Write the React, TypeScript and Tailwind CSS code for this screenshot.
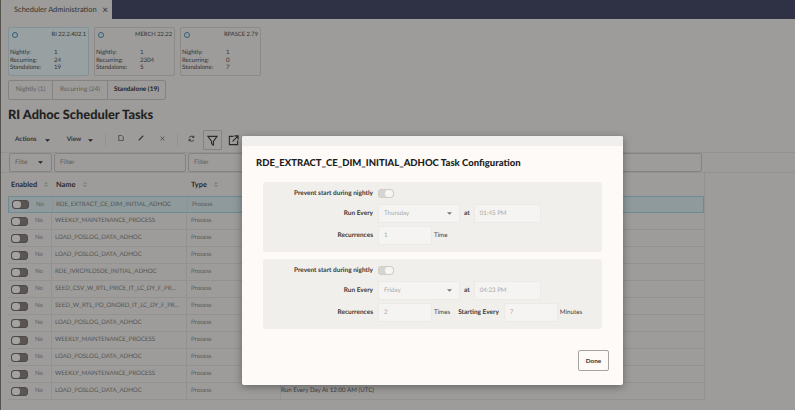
import React from "react";
import { ChevronsUpDown } from "lucide-react";

const cards = [
  { name: "RI 22.2.402.1", nightly: 1, recurring: 24, standalone: 19, active: true },
  { name: "MERCH 22.22", nightly: 1, recurring: 2304, standalone: 5, active: false },
  { name: "RPASCE 2.79", nightly: 1, recurring: 0, standalone: 7, active: false },
];

const rows = [
  "RDE_EXTRACT_CE_DIM_INITIAL_ADHOC",
  "WEEKLY_MAINTENANCE_PROCESS",
  "LOAD_POSLOG_DATA_ADHOC",
  "LOAD_POSLOG_DATA_ADHOC",
  "RDE_IVRCPILDSDE_INITIAL_ADHOC",
  "SEED_CSV_W_RTL_PRICE_IT_LC_DY_F_PR...",
  "SEED_W_RTL_PO_ONORD_IT_LC_DY_F_PR...",
  "LOAD_POSLOG_DATA_ADHOC",
  "WEEKLY_MAINTENANCE_PROCESS",
  "LOAD_POSLOG_DATA_ADHOC",
  "WEEKLY_MAINTENANCE_PROCESS",
  "LOAD_POSLOG_DATA_ADHOC",
];

const Caret = ({ className }: { className: string }) => (
  <svg viewBox="0 0 8 4" className={className} fill="currentColor">
    <path d="M0 0h8L4 4z" />
  </svg>
);

const SortHead = ({ label, className }: { label: string; className: string }) => (
  <div className={`flex items-center gap-[6px] text-[7.4px] font-bold text-[#2b2a28] ${className}`}>
    {label}
    <ChevronsUpDown className="w-[6px] h-[7px] text-[#444]" strokeWidth={2} />
  </div>
);

const SummaryCard = ({ card }: { card: (typeof cards)[number] }) => (
  <div
    className={`w-[81px] h-[49px] rounded-[2px] border pl-[1px] pr-[1px] pt-[1px] text-[6.1px] leading-[7.6px] text-[#33322f] ${
      card.active ? "border-[#7f9399] bg-[#98a0a2]" : "border-[#8b8a89] bg-[#9d9c9b]"
    }`}
  >
    <div className="flex items-center justify-between h-[11px]">
      <div className="ml-[2px] w-[6px] h-[6px] rounded-full border-[1.5px] border-[#2f5f78]" />
      <span className="text-[5.8px] mr-[1px]">{card.name}</span>
    </div>
    <div className="mt-[9px] grid grid-cols-[44px_1fr]">
      <span>Nightly:</span>
      <span>{card.nightly}</span>
      <span>Recurring:</span>
      <span>{card.recurring}</span>
      <span>Standalone:</span>
      <span>{card.standalone}</span>
    </div>
  </div>
);

const FilterBox = ({ label, className }: { label: string; className: string }) => (
  <div
    className={`h-[19px] flex items-center justify-between rounded-[2px] border border-[#848382] px-[5px] text-[6.4px] text-[#5e5d5b] ${className}`}
  >
    {label}
    {label === "Filte" && <Caret className="w-[5px] h-[3px] text-[#222] mr-[3px]" />}
  </div>
);

const TableRow = ({ name, index }: { name: string; index: number }) => (
  <div
    className={`h-[17px] flex items-center text-[6.1px] border-b ${
      index === 0 ? "border border-[#6e8a92] bg-[#8f9a9d]" : "border-[#939291]"
    }`}
  >
    <div className="w-[44px] h-full flex items-center gap-[7px] pl-[3px] border-r border-[#939291]">
      <div className="w-[17px] h-[9px] rounded-[3px] bg-[#5a5552] border border-[#4e4a48] flex">
        <div className="w-[8px] h-full rounded-[3px] bg-[#a4a3a2]" />
      </div>
      <span className="text-[#605f5d]">No</span>
    </div>
    <div className="w-[135px] h-full flex items-center pl-[3px] border-r border-[#939291] text-[#555452] whitespace-nowrap overflow-hidden">
      {name}
    </div>
    <div className="w-[94px] h-full flex items-center pl-[4px] border-r border-[#939291] text-[#555452]">
      Process
    </div>
    <div className="flex-1 h-full flex items-center text-[6.2px] text-[#403f3d]">
      {index === 11 ? "Run Every Day At 12:00 AM (UTC)" : ""}
    </div>
  </div>
);

const Field = ({ value, className, caret }: { value: string; className: string; caret?: boolean }) => (
  <div
    className={`h-[19px] flex items-center justify-between rounded-[2px] border border-[#ebeae7] bg-[#f5f4f2] px-[5px] text-[6.2px] text-[#a9a8a6] ${className}`}
  >
    {value}
    {caret && <Caret className="w-[5px] h-[3px] text-[#77767a] mr-[2px]" />}
  </div>
);

const Label = ({ children, className = "w-[110px]" }: { children: string; className?: string }) => (
  <div className={`text-right text-[6.5px] font-bold text-[#3a3937] whitespace-nowrap ${className}`}>{children}</div>
);

const ScheduleBox = ({
  day,
  time,
  count,
  unit,
  every,
  className,
}: {
  day: string;
  time: string;
  count: string;
  unit: string;
  every?: string;
  className: string;
}) => (
  <div className={`h-[70px] rounded-[3px] bg-[#f1efec] pt-[6px] flex flex-col ${className}`}>
    <div className="flex items-center gap-[5px] h-[11px]">
      <Label>Prevent start during nightly</Label>
      <div className="w-[16px] h-[9px] rounded-[3px] border border-[#d0cecb] bg-[#d6d4d1] flex justify-end">
        <div className="w-[8px] h-full rounded-[3px] bg-[#f6f5f3]" />
      </div>
    </div>
    <div className="flex items-center gap-[4px] mt-[5px]">
      <Label className="w-[110px] mr-[1px]">Run Every</Label>
      <Field value={day} caret className="w-[82px]" />
      <span className="text-[6.5px] text-[#3a3937] font-bold">at</span>
      <Field value={time} className="w-[67px]" />
    </div>
    <div className="flex items-center gap-[5px] mt-[3px]">
      <Label>Recurrences</Label>
      <Field value={count} className="w-[54px]" />
      <span className="-ml-[3px] text-[6.2px] text-[#3a3937]">{unit}</span>
      {every && (
        <>
          <Label className="ml-[3px]">Starting Every</Label>
          <Field value={every} className="w-[54px]" />
          <span className="-ml-[3px] text-[6.2px] text-[#3a3937]">Minutes</span>
        </>
      )}
    </div>
  </div>
);

export default function App() {
  return (
    <div className="relative w-[795px] h-[410px] overflow-hidden bg-[#9d9c9b] border-l border-[#55544f] font-['Lato',sans-serif] [text-rendering:geometricPrecision]">
      <div className="flex h-[19px] bg-[#2f3144]">
        <div className="w-[111px] flex items-center justify-between pl-[13px] pr-[4px] bg-[#9d9c9b] text-[7.5px] text-[#33322f] whitespace-nowrap">
          <span>Scheduler Administration</span>
          <span className="text-[10px] leading-none">×</span>
        </div>
      </div>

      <div className="pl-[7px] pt-[8px]">
        <div className="flex gap-[5px]">
          {cards.map((card) => (
            <SummaryCard key={card.name} card={card} />
          ))}
        </div>

        <div className="mt-[4px] flex w-[158px] h-[20px] rounded-[2px] border border-[#848382] text-[6.5px] text-[#5e5d5b]">
          <div className="w-[44px] flex items-center justify-center border-r border-[#848382]">Nightly (1)</div>
          <div className="w-[55px] flex items-center justify-center border-r border-[#848382]">Recurring (24)</div>
          <div className="flex-1 flex items-center justify-center font-bold text-[#1f1e1c]">Standalone (19)</div>
        </div>

        <h1 className="mt-[5px] text-[12.8px] leading-[18px] font-black text-[#232220]">RI Adhoc Scheduler Tasks</h1>

        <div className="mt-[7px] flex items-center h-[20px] text-[6.4px] font-bold text-[#33322f]">
          <span className="ml-[7px]">Actions</span>
          <Caret className="w-[5px] h-[3px] ml-[8px] text-[#222]" />
          <span className="ml-[17px]">View</span>
          <Caret className="w-[5px] h-[3px] ml-[7px] text-[#222]" />
          <div className="w-px h-[12px] ml-[12px] bg-[#939291]" />
          <svg viewBox="0 0 8 8" className="w-[6px] h-[6px] ml-[12px] -mt-[4px]" fill="none" stroke="#3a3937">
            <path d="M1 .5h4l2 2v5H1z" />
          </svg>
          <svg viewBox="0 0 8 8" className="w-[6px] h-[6px] ml-[14px] -mt-[4px]" fill="none" stroke="#3a3937" strokeWidth="1.6">
            <path d="M1 7l6-6" />
          </svg>
          <svg viewBox="0 0 8 8" className="w-[5px] h-[5px] ml-[16px] -mt-[4px]" fill="none" stroke="#3a3937" strokeWidth="1.2">
            <path d="M1 1l6 6M7 1L1 7" />
          </svg>
          <div className="w-px h-[12px] ml-[12px] bg-[#939291]" />
          <svg viewBox="0 0 10 10" className="w-[7px] h-[7px] ml-[10px] -mt-[4px]" fill="none" stroke="#3a3937" strokeWidth="1.4">
            <path d="M8.500 3.500A4 4 0 0 0 1.500 4M1.500 6.500a4 4 0 0 0 7 .5M8.500 1v2.500H6M1.500 9V6.500H4" />
          </svg>
          <div className="ml-[8px] w-[19px] h-[20px] flex items-center justify-center border border-[#848382] rounded-[1px]">
            <svg viewBox="0 0 12 12" className="w-[11px] h-[11px]" fill="none" stroke="#2b2a28" strokeWidth="1.2">
              <path d="M1 1.500h10L7 7v4L5 9.500V7z" />
            </svg>
          </div>
          <svg viewBox="0 0 12 12" className="w-[11px] h-[11px] ml-[6px]" fill="none" stroke="#2b2a28" strokeWidth="1.2">
            <path d="M6 1.500H1.500v9h9V6M7 1h4v4M11 1L5 7" />
          </svg>
        </div>

        <div className="mt-[2px] -ml-[7px] pl-[8px] flex gap-[2px] border-y border-[#939291]">
          <FilterBox label="Filte" className="w-[43px]" />
          <FilterBox label="Filter" className="w-[132px]" />
          <FilterBox label="Filter" className="w-[514px]" />
        </div>

        <div className="w-[697px] h-[23px] flex items-center border-r border-[#939291]">
          <SortHead label="Enabled" className="w-[44px] pl-[3px]" />
          <SortHead label="Name" className="w-[135px] pl-[4px]" />
          <SortHead label="Type" className="pl-[4px]" />
        </div>

        <div className="w-[697px] flex flex-col border-r border-[#939291]">
          {rows.map((name, i) => (
            <TableRow key={`${name}-${i}`} name={name} index={i} />
          ))}
        </div>
      </div>

      <div className="absolute left-[241px] top-[136px] w-[381px] h-[249px] rounded-[2px] bg-[#fdfaf8] shadow-[0_2px_8px_rgba(0,0,0,0.35)] flex flex-col">
        <div className="h-[10px] rounded-t-[2px] bg-[#f0efed]" />
        <h2 className="mt-[11px] ml-[14px] text-[9.5px] leading-[14px] font-black text-[#1d1c1a] whitespace-nowrap">
          RDE_EXTRACT_CE_DIM_INITIAL_ADHOC Task Configuration
        </h2>
        <ScheduleBox day="Thursday" time="01:45 PM" count="1" unit="Time" className="mt-[11px] mx-[21px] w-[339px]" />
        <ScheduleBox
          day="Friday"
          time="04:23 PM"
          count="2"
          unit="Times"
          every="7"
          className="mt-[7px] mx-[21px] w-[339px]"
        />
        <div className="flex justify-end mt-[21px] pr-[14px]">
          <button className="w-[31px] h-[21px] rounded-[2px] border-[1.5px] border-[#a5a4a2] bg-[#fdfaf8] text-[6.4px] font-bold text-[#33322f]">
            Done
          </button>
        </div>
      </div>
    </div>
  );
}
